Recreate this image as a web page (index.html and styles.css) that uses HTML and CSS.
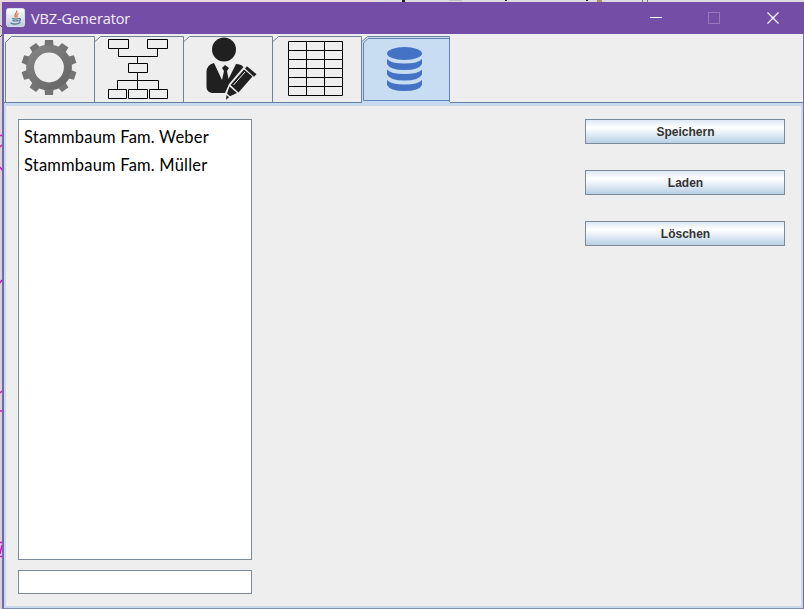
FILE: index.html
```html
<!DOCTYPE html>
<html lang="de">
<head>
<meta charset="utf-8">
<title>VBZ-Generator</title>
<link rel="stylesheet" href="styles.css">
</head>
<body>
<svg class="backdrop" width="804" height="609" viewBox="0 0 804 609" aria-hidden="true">
  <rect width="804" height="2" fill="#dedae3"/>
  <rect width="380" height="2" fill="#ead9dc"/>
  <path d="M402 0h3v2h-3zM505 0h2v1h-2zM586 0h2v1h-2z" fill="#222"/>
  <path d="M449 0h13v1h-13z" fill="#c4bfc4"/>
  <path d="M597 0h5v2h-5z" fill="#aa9460"/>
  <path d="M642.500 0v2M647.500 0v2" stroke="#777"/>
  <path d="M0 25l2 2M0 37l2-2" stroke="#70464e"/>
  <path d="M0 135.500h2M0 147l2-2M0 167l2 3M0 283l2-3M0 393l2-2M0 411h2M0 556.500h2M0 542.500h2M0 554l2-9" stroke="#c31cc0" stroke-width="1.500"/>
</svg>
<main class="window">
  <header class="titlebar">
    <svg class="app-icon" width="20" height="20" viewBox="0 0 20 20">
      <defs><linearGradient id="tile" x2="0" y2="1"><stop stop-color="#fff"/><stop offset="1" stop-color="#bccbdc"/></linearGradient></defs>
      <rect x=".5" y=".5" width="18" height="18" rx="2" fill="url(#tile)" stroke="#d5deea"/>
      <path d="M10.500 2.500c2 2-3.500 3.500-1 7M12.500 5.500c-3 1.500-1.500 2-1.500 4" fill="none" stroke="#dc7548" stroke-width="1.300"/>
      <path d="M6 10.500q3 1 7 0M6.500 12.500q3 1 6 0M4.500 15q5 2.500 10-.5M13 10.500q3 0 0 3" fill="none" stroke="#54718f" stroke-width="1.100"/>
    </svg>
    <h1 class="title">VBZ-Generator</h1>
    <svg class="controls" width="134" height="20" viewBox="644 8 134 20" fill="none" stroke="#fff">
      <path d="M650 17.500h12"/>
      <rect x="708.500" y="12.500" width="11" height="11" stroke="#9a76bd"/>
      <path d="M767.500 12.500l11 11M778.500 12.500l-11 11" stroke-width="1.200"/>
    </svg>
  </header>
  <nav class="tabs">
    <svg width="90" height="68" viewBox="5 34 90 68">
      <defs>
        <linearGradient id="steel" gradientUnits="userSpaceOnUse" x1="30" y1="45" x2="68" y2="90"><stop stop-color="#868686"/><stop offset="1" stop-color="#646464"/></linearGradient>
        <path id="teeth" d="M44.500 45.500l.5-5.500h8l.5 5.500zM44.500 89.500l.5 5.500h8l.5-5.500z"/>
      </defs>
      <path class="edge" d="M5.500 102V42.500L11.500 36.500H94.500V102"/>
      <circle cx="49" cy="67.500" r="18.900" fill="none" stroke="url(#steel)" stroke-width="8"/>
      <g fill="#747474">
        <use href="#teeth"/>
        <use href="#teeth" transform="rotate(36 49 67.500)"/>
        <use href="#teeth" transform="rotate(72 49 67.500)"/>
        <use href="#teeth" transform="rotate(108 49 67.500)"/>
        <use href="#teeth" transform="rotate(144 49 67.500)"/>
      </g>
    </svg>
    <svg width="89" height="68" viewBox="95 34 89 68">
      <path class="edge" d="M95 41.500L100.500 36.500H183.500V102"/>
      <g class="drawing">
        <path d="M108.500 39.500h20v9h-20zM147.500 39.500h20v9h-20zM128.500 63.500h19v9h-19zM108.500 89.500h18v9h-18zM128.500 89.500h19v9h-19zM149.500 89.500h18v9h-18z"/>
        <path d="M118.500 48.500v8h39v-8M137.500 56.500v7M137.500 72.500v17M117.500 89.500v-9h41v9"/>
      </g>
    </svg>
    <svg width="89" height="68" viewBox="184 34 89 68">
      <path class="edge" d="M184 41.500L189.500 36.500H272.500V102"/>
      <g fill="#202020">
        <circle cx="224" cy="49.500" r="12"/>
        <path d="M214 63l8 17 2-9-2-3 3-3 4 3-2 3 1.500 8 7.500-15q5 0 7.500 3L229 84l-4 9h-13q-5.500-1-5.500-6V72q0-7 7.500-9z"/>
        <path d="M230.500 85l13.500-15.500 8.500 7L238.500 92.500z"/>
        <path d="M245 68.500l2-2.300 9.500 8-2.500 2.600z"/>
        <path d="M229.500 86.500l7.500 6.500-7 3.200-3-2.800zM226.500 95l2.500 2.200-3 2.600z"/>
      </g>
      <path d="M233.500 85l11.500-13" stroke="#eee"/>
    </svg>
    <svg width="89" height="68" viewBox="273 34 89 68">
      <path class="edge" d="M273 41.500L278.500 36.500H361.500V102"/>
      <path class="drawing" d="M288.500 41.500h54v54h-54zM288.500 50.500h54M288.500 59.500h54M288.500 68.500h54M288.500 77.500h54M288.500 86.500h54M306.500 41.500v54M324.500 41.500v54"/>
    </svg>
    <svg class="selected" width="88" height="69" viewBox="362 34 88 69">
      <path d="M362 103V42L367.500 36.500H450V103z" fill="#c8dcf2"/>
      <path class="edge" d="M362 41.500L367.500 36.500H449.500V102"/>
      <path class="focus" d="M363.500 100.500V43L368 38.500H449.500V100.500z"/>
      <g fill="#4472c4">
        <ellipse cx="404.500" cy="53.500" rx="17.500" ry="6.500"/>
        <path id="disc" d="M387 59q4 4.500 17.500 4.500T422 59v5q-3 6-17.500 6T387 64z"/>
        <use href="#disc" y="10.500"/>
        <use href="#disc" y="21"/>
      </g>
    </svg>
  </nav>
  <section class="pane">
    <div class="lists">
      <ul class="entries">
        <li>Stammbaum Fam. Weber</li>
        <li>Stammbaum Fam. Müller</li>
      </ul>
      <input class="name" type="text" aria-label="Name">
    </div>
    <div class="actions">
      <button>Speichern</button>
      <button>Laden</button>
      <button>Löschen</button>
    </div>
  </section>
</main>
</body>
</html>
```
FILE: styles.css
```css
* { box-sizing: border-box; }
body {
  margin: 0;
  width: 804px;
  height: 609px;
  padding: 2px 0 0 2px;
  overflow: hidden;
  background: #d9d2dc;
}
.backdrop { position: absolute; left: 0; top: 0; z-index: -1; }
.window {
  height: 607px;
  display: flex;
  flex-direction: column;
  background: #eee;
  border: solid #726aa8;
  border-width: 0 1px 1px 2px;
  border-bottom-color: #7d8fae;
}
.titlebar {
  height: 32px;
  margin: 0 -1px 0 -2px;
  padding: 0 26px 0 4px;
  display: flex;
  align-items: center;
  background: #744da6;
  flex: none;
}
.app-icon { margin-top: -1px; }
.controls { overflow: visible; }
.title {
  margin: 1px auto 0 5px;
  color: #f4effa;
  font: 400 14.5px "Open Sans", sans-serif;
  letter-spacing: -.1px;
}
.tabs { height: 68px; padding-left: 1px; display: flex; flex: none; }
.tabs svg { display: block; flex: none; }
.edge { fill: none; stroke: #6f8296; }
.focus { fill: none; stroke: #5f83b5; }
.drawing { fill: none; stroke: #000; }
.selected { z-index: 1; }
.pane {
  flex: 1;
  display: flex;
  justify-content: space-between;
  align-items: flex-start;
  margin-top: 1px;
  padding: 13px 16px 0 12px;
  border: 2px solid #c8d9ef;
  border-top-width: 3px;
  box-shadow: 0 -1px #6382a3;
}
.lists { width: 234px; display: flex; flex-direction: column; gap: 10px; }
.entries {
  height: 441px;
  margin: 0;
  padding: 3px 5px;
  list-style: none;
  background: #fff;
  border: 1px solid #7a8a99;
  color: #000;
  font: 16.5px/28px Lato, sans-serif;
  letter-spacing: .2px;
}
.name { width: 234px; height: 24px; border: 1px solid #7a8a99; background: #fff; padding: 2px 5px; }
.actions { width: 200px; display: flex; flex-direction: column; gap: 26px; }
.actions button {
  height: 25px;
  padding: 0 0 0 1px;
  border: 1px solid #7a8a99;
  border-radius: 0;
  background: linear-gradient(#dde8f3 0%, #fff 32%, #f4f8fc 45%, #b8cfe5 100%);
  color: #333;
  font: bold 12px "Liberation Sans", sans-serif;
}
```
